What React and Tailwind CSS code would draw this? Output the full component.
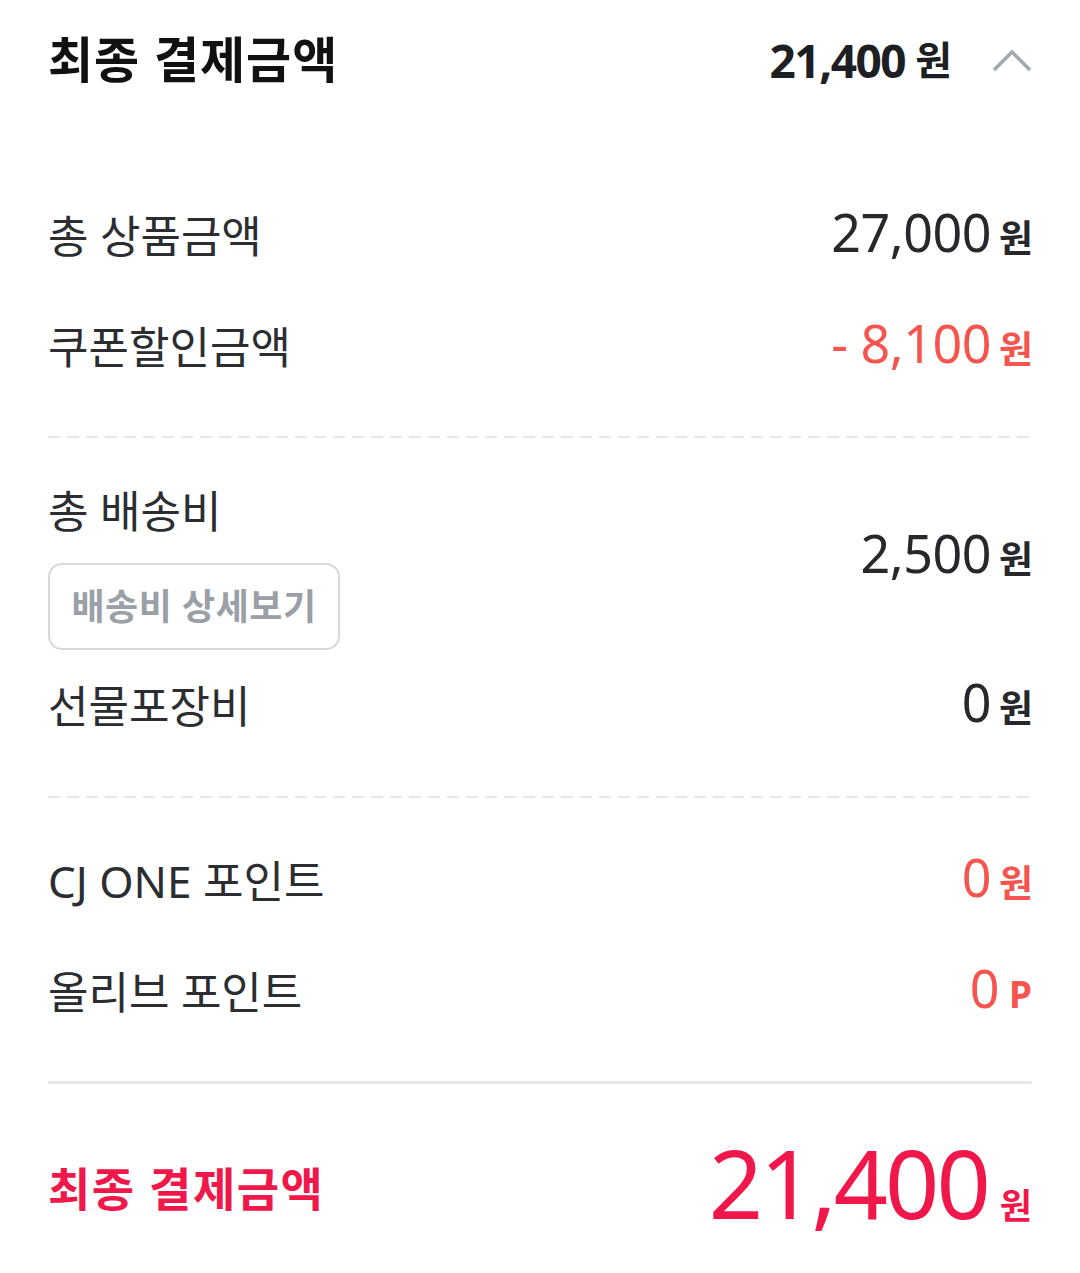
import React from "react";

const font = { fontFamily: '"Noto Sans", "Noto Sans CJK KR", sans-serif' };

const Won = ({ className = "" }) => (
  <span className={`ml-[8px] text-[37px] font-bold tracking-[-1px] ${className}`}>원</span>
);

const Row = ({ label, children, className = "h-[111px]" }) => (
  <div className={`flex items-center justify-between ${className}`}>
    <span className="text-[44px] tracking-[0px] text-[#2b2d31]">{label}</span>
    <div className="flex items-baseline">{children}</div>
  </div>
);

const Dashed = () => (
  <div className="h-[2px] w-full bg-[linear-gradient(to_right,#e6e6e8_12px,transparent_12px)] bg-[length:19px_2px] bg-repeat-x" />
);

const Amount = ({ value, color = "text-[#26282c]" }) => (
  <span className={`text-[52px] leading-none tracking-[-0.5px] ${color}`}>{value}</span>
);

export default function App() {
  return (
    <div className="w-[1080px] min-h-[1273px] bg-white px-[48px]" style={font}>
      {/* 헤더 */}
      <div className="flex h-[120px] items-center justify-between">
        <h1 className="text-[49px] font-bold tracking-[1px] text-[#111]">최종 결제금액</h1>
        <div className="flex items-center">
          <span className="text-[46px] font-bold tracking-[-1.5px] text-[#1d1f23]">21,400</span>
          <span className="ml-[10px] text-[40px] font-bold text-[#1d1f23]">원</span>
          <svg className="ml-[40px]" width="40" height="24" viewBox="0 0 40 24" fill="none">
            <path d="M2 22 L20 4 L38 22" stroke="#a3a9ae" strokeWidth="3.5" />
          </svg>
        </div>
      </div>

      <div className="pt-[60px] pb-[34px]">
        <Row label="총 상품금액">
          <Amount value="27,000" />
          <Won className="text-[#26282c]" />
        </Row>
        <Row label="쿠폰할인금액">
          <Amount value="- 8,100" color="text-[#f5554e]" />
          <Won className="text-[#f5554e]" />
        </Row>
      </div>
      <Dashed />

      <div className="pt-[43px] pb-[35px]">
        <div className="flex items-center justify-between">
          <div className="flex flex-col items-start">
            <span className="h-[60px] text-[44px] leading-[60px] text-[#2b2d31]">총 배송비</span>
            <button
              type="button"
              className="mt-[22px] flex h-[87px] w-[292px] items-center justify-center rounded-[14px] border-2 border-[#d6d9dc] text-[36px] font-bold tracking-[0.5px] text-[#9aa0a6]"
            >
              배송비 상세보기
            </button>
          </div>
          <div className="mb-[18px] flex items-baseline">
            <Amount value="2,500" />
            <Won className="text-[#26282c]" />
          </div>
        </div>
        <Row label="선물포장비">
          <Amount value="0" />
          <Won className="text-[#26282c]" />
        </Row>
      </div>
      <Dashed />

      <div className="pt-[27px] pb-[34px]">
        <Row label="CJ ONE 포인트">
          <Amount value="0" color="text-[#f5554e]" />
          <Won className="text-[#f5554e]" />
        </Row>
        <Row label="올리브 포인트">
          <Amount value="0" color="text-[#f5554e]" />
          <span className="ml-[10px] text-[37px] font-bold text-[#f5554e]">P</span>
        </Row>
      </div>
      <div className="h-[3px] w-full bg-[#e8e8ec]" />

      <div className="flex h-[200px] items-center justify-between">
        <span className="mt-[8px] text-[46px] font-bold tracking-[1.5px] text-[#f0174a]">최종 결제금액</span>
        <div className="flex items-baseline">
          <span className="text-[95px] leading-none tracking-[-3px] text-[#f0174a]">21,400</span>
          <span className="ml-[12px] text-[35px] font-bold text-[#f0174a]">원</span>
        </div>
      </div>
    </div>
  );
}
